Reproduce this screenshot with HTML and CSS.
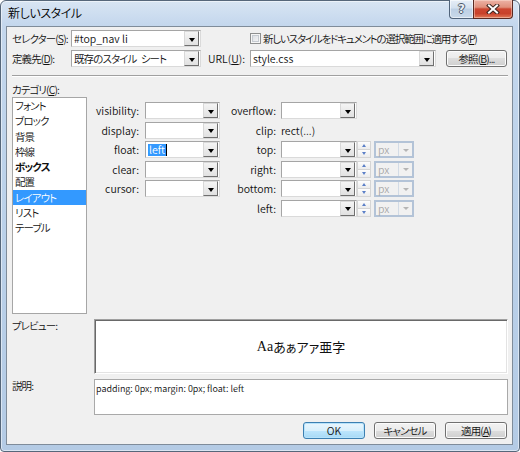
FILE: index.html
```html
<!DOCTYPE html>
<html lang="ja">
<head>
<meta charset="utf-8">
<title>新しいスタイル</title>
<link rel="stylesheet" href="styles.css">
</head>
<body>
<div class="window">
  <div class="titlebar">
    <span class="title jp">新しいスタイル</span>
    <div class="caption">
      <div class="cbtn help"><span class="qmark">?</span></div>
      <div class="cbtn close">
        <svg class="xicon" width="14" height="10" viewBox="0 0 14 10">
          <path d="M3 1.5 L11 8.5 M11 1.5 L3 8.5" stroke="#3d2620" stroke-width="4" stroke-linecap="square" fill="none"/>
          <path d="M3 1.5 L11 8.5 M11 1.5 L3 8.5" stroke="#ffffff" stroke-width="2" stroke-linecap="square" fill="none"/>
        </svg>
      </div>
    </div>
  </div>
  <div class="client">
    <div class="row">
      <span class="lbl jp">セレクター(<u>S</u>):</span>
      <div class="combo w130"><span class="val">#top_nav li</span><span class="dd"><i class="arrow"></i></span></div>
      <div class="check"><span class="box"></span><span class="check-text jp">新しいスタイルをドキュメントの選択範囲に適用する(<u>P</u>)</span></div>
    </div>
    <div class="row">
      <span class="lbl jp">定義先(<u>D</u>):</span>
      <div class="combo w130"><span class="val jp">既存のスタイル&ensp;シート</span><span class="dd"><i class="arrow"></i></span></div>
      <span class="lbl url-lbl">URL(<u>U</u>):</span>
      <div class="combo w186"><span class="val">style.css</span><span class="dd"><i class="arrow"></i></span></div>
      <div class="btn browse jp">参照(<u>B</u>)...</div>
    </div>
    <div class="sep"></div>
    <div class="cat-label jp">カテゴリ(<u>C</u>):</div>
    <div class="main">
      <ul class="list jp">
        <li>フォント</li>
        <li>ブロック</li>
        <li>背景</li>
        <li>枠線</li>
        <li class="bold">ボックス</li>
        <li>配置</li>
        <li class="selected">レイアウト</li>
        <li>リスト</li>
        <li>テーブル</li>
      </ul>
      <div class="props">
        <div class="group left-group">
          <span class="plbl">visibility:</span>
          <div class="combo"><span class="val"></span><span class="dd"><i class="arrow"></i></span></div>
          <span class="plbl">display:</span>
          <div class="combo"><span class="val"></span><span class="dd"><i class="arrow"></i></span></div>
          <span class="plbl">float:</span>
          <div class="combo"><span class="val"><span class="sel">left</span><span class="caret"></span></span><span class="dd"><i class="arrow"></i></span></div>
          <span class="plbl">clear:</span>
          <div class="combo"><span class="val"></span><span class="dd"><i class="arrow"></i></span></div>
          <span class="plbl">cursor:</span>
          <div class="combo"><span class="val"></span><span class="dd"><i class="arrow"></i></span></div>
        </div>
        <div class="group right-group">
          <span class="plbl">overflow:</span>
          <div class="combo"><span class="val"></span><span class="dd"><i class="arrow"></i></span></div>
          <span></span><span></span>

          <span class="plbl">clip:</span>
          <span class="clip-val">rect(...)</span>
          <span></span><span></span>

          <span class="plbl">top:</span>
          <div class="combo"><span class="val"></span><span class="dd"><i class="arrow"></i></span></div>
          <div class="spin"><span class="up"><i></i></span><span class="down"><i></i></span></div>
          <div class="unit"><span class="uval">px</span><span class="udd"><i></i></span></div>

          <span class="plbl">right:</span>
          <div class="combo"><span class="val"></span><span class="dd"><i class="arrow"></i></span></div>
          <div class="spin"><span class="up"><i></i></span><span class="down"><i></i></span></div>
          <div class="unit"><span class="uval">px</span><span class="udd"><i></i></span></div>

          <span class="plbl">bottom:</span>
          <div class="combo"><span class="val"></span><span class="dd"><i class="arrow"></i></span></div>
          <div class="spin"><span class="up"><i></i></span><span class="down"><i></i></span></div>
          <div class="unit"><span class="uval">px</span><span class="udd"><i></i></span></div>

          <span class="plbl">left:</span>
          <div class="combo"><span class="val"></span><span class="dd"><i class="arrow"></i></span></div>
          <div class="spin"><span class="up"><i></i></span><span class="down"><i></i></span></div>
          <div class="unit"><span class="uval">px</span><span class="udd"><i></i></span></div>
        </div>
      </div>
    </div>
    <div class="box-row preview-row">
      <span class="side-lbl jp">プレビュー:</span>
      <div class="preview"><span class="serif">Aa</span>あぁアァ亜字</div>
    </div>
    <div class="box-row desc-row">
      <span class="side-lbl jp">説明:</span>
      <div class="desc">padding: 0px; margin: 0px; float: left</div>
    </div>
    <div class="buttons">
      <div class="btn default">OK</div>
      <div class="btn jp">キャンセル</div>
      <div class="btn jp">適用(<u>A</u>)</div>
    </div>
  </div>
</div>
</body>
</html>
```

FILE: styles.css
```css
* { box-sizing: border-box; }
html, body { margin: 0; padding: 0; }
body {
  width: 520px;
  height: 452px;
  overflow: hidden;
  background: #ffffff;
  font-family: "Noto Sans CJK JP", "Noto Sans", sans-serif;
  font-size: 10.5px;
  font-weight: 350;
  color: #111;
  font-feature-settings: "palt";
}
.jp { letter-spacing: -0.9px; }
u { text-decoration: underline; text-underline-offset: 1px; text-decoration-thickness: 1px; }

.window {
  width: 520px;
  height: 452px;
  border: 1px solid #56677a;
  border-radius: 6px 6px 4px 4px;
  background: linear-gradient(#d8e5f3 0, #c4d7ed 24px, #bcd2ea 40%, #b4cbe5 100%);
  box-shadow: inset 0 0 0 1px rgba(255,255,255,0.5);
  display: flex;
  flex-direction: column;
}

.titlebar {
  flex: none;
  height: 25px;
  display: flex;
  align-items: flex-start;
  padding-left: 7px;
}
.title {
  font-size: 12px;
  line-height: 24px;
  letter-spacing: -0.4px;
  color: #000;
}
.caption {
  margin-left: auto;
  margin-right: 6px;
  margin-top: -1px;
  display: flex;
}
.cbtn {
  height: 19px;
  border: 1px solid #50637a;
  border-top: none;
  display: flex;
  align-items: center;
  justify-content: center;
  flex: none;
}
.help {
  width: 24px;
  border-right: none;
  border-radius: 0 0 0 4px;
  background: linear-gradient(#e6eef7 0, #d3e0ee 45%, #bccfe4 50%, #c9d9ea 100%);
  box-shadow: inset 0 0 0 1px rgba(255,255,255,0.55);
}
.qmark {
  font-family: "DejaVu Sans", sans-serif;
  font-weight: bold;
  font-size: 12px;
  line-height: 12px;
  color: #e9eef4;
  text-shadow: 1px 0 0 #4b5a6b, -1px 0 0 #4b5a6b, 0 1px 0 #4b5a6b, 0 -1px 0 #4b5a6b;
}
.close {
  width: 40px;
  border-color: #5a2a22;
  border-radius: 0 0 4px 0;
  background: linear-gradient(#edb3a6 0, #e0907c 40%, #cc4630 50%, #c8412a 75%, #e07a58 100%);
  box-shadow: inset 0 0 0 1px rgba(255,230,220,0.45);
}
.xicon { display: block; }

.client {
  flex: 1;
  margin: 0 6px 6px 5px;
  border: 1px solid #7f8c9a;
  background: #f0f0f0;
  padding: 3px 4px 0 5px;
  display: flex;
  flex-direction: column;
}

.row {
  display: flex;
  align-items: center;
  height: 17px;
  margin-bottom: 3px;
}
.lbl {
  width: 59px;
  flex: none;
  line-height: 17px;
  white-space: nowrap;
}
.url-lbl { width: 42px; margin-left: 7px; }

.combo {
  height: 17px;
  display: flex;
  align-items: stretch;
  background: #fff;
  border: 1px solid;
  border-color: #a5a5a5 #dadada #dadada #a5a5a5;
  flex: none;
}
.w130 { width: 130px; }
.w186 { width: 186px; }
.combo .val {
  flex: 1;
  padding-left: 2px;
  line-height: 15px;
  white-space: nowrap;
  overflow: hidden;
  display: flex;
  align-items: center;
}
.combo .dd {
  width: 15px;
  margin: 0 1px 0 0;
  border: 1px solid;
  border-color: #d8d8d8 #6f6f6f #6f6f6f #d8d8d8;
  background: linear-gradient(#f4f4f4, #e1e1e1);
  display: flex;
  align-items: center;
  justify-content: center;
  flex: none;
}
.arrow {
  display: block;
  width: 0;
  height: 0;
  margin-top: 2px;
  border-left: 3.5px solid transparent;
  border-right: 3.5px solid transparent;
  border-top: 4px solid #000;
}

.check {
  margin-left: 49px;
  display: flex;
  align-items: center;
}
.check .box {
  width: 11px;
  height: 11px;
  border: 1px solid #8e8f8f;
  background: linear-gradient(135deg, #d6d9de, #fbfbfb);
  box-shadow: inset 0 0 0 1px #f6f6f6, inset 0 0 0 2px #c6cbd1;
  margin-right: 2px;
}
.check-text { line-height: 17px; white-space: nowrap; letter-spacing: -1.2px; }

.btn {
  height: 17px;
  border: 1px solid #707070;
  border-radius: 3px;
  background: linear-gradient(#f2f2f2 0, #ebebeb 50%, #dddddd 50%, #cfcfcf 100%);
  box-shadow: inset 0 0 0 1px #fcfcfc;
  display: flex;
  align-items: center;
  justify-content: center;
  line-height: 15px;
  white-space: nowrap;
  flex: none;
}
.browse { width: 61px; margin-left: 10px; }

.sep {
  margin-top: 5px;
  height: 2px;
  border-top: 1px solid #a0a0a0;
  border-bottom: 1px solid #ffffff;
}
.cat-label {
  height: 20px;
  padding-top: 6px;
  line-height: 14px;
}

.main {
  display: flex;
  height: 217px;
}
.list {
  margin: 0;
  padding: 0;
  list-style: none;
  width: 75px;
  height: 217px;
  border: 1px solid #a6a6a6;
  background: #fff;
}
.list li {
  height: 15.3px;
  line-height: 15.3px;
  padding-left: 2px;
  white-space: nowrap;
}
.list li.bold { font-weight: bold; }
.list li.selected { background: #3399ff; color: #fff; }

.props {
  display: flex;
  margin-left: 7px;
  margin-top: 5px;
  align-items: flex-start;
}
.group {
  display: grid;
  grid-auto-rows: 17px;
  row-gap: 2.6px;
  align-items: center;
}
.left-group { grid-template-columns: 45px 75px; column-gap: 6px; }
.right-group { grid-template-columns: 61px 76px 14px 43px; }
.right-group .plbl { padding-right: 5px; }
.plbl {
  text-align: right;
  line-height: 17px;
  white-space: nowrap;
}
.group .combo { width: 100%; }
.clip-val { line-height: 17px; white-space: nowrap; }

.sel { background: #3399ff; color: #fff; padding: 0 1px; line-height: 12px; }
.caret { display: inline-block; width: 1px; height: 12px; background: #000; }

.spin {
  height: 17px;
  display: flex;
  flex-direction: column;
}
.spin span {
  flex: 1;
  border: 1px solid #d5d5d5;
  background: linear-gradient(#fdfdfd, #ececec);
  display: flex;
  align-items: center;
  justify-content: center;
}
.spin .down { border-top: none; }
.spin .up i {
  display: block; width: 0; height: 0;
  border-left: 2.5px solid transparent; border-right: 2.5px solid transparent;
  border-bottom: 3px solid #5b7fc7;
}
.spin .down i {
  display: block; width: 0; height: 0;
  border-left: 2.5px solid transparent; border-right: 2.5px solid transparent;
  border-top: 3px solid #5b7fc7;
}

.unit {
  margin-left: 3px;
  width: 40px;
  height: 17px;
  border: 2px solid #b3c3d7;
  background: #f1f1f1;
  display: flex;
}
.uval {
  flex: 1;
  color: #a8a8a8;
  line-height: 13px;
  padding-left: 2px;
}
.udd {
  width: 14px;
  border-left: 1px solid #d2dbe6;
  display: flex;
  align-items: center;
  justify-content: center;
}
.udd i {
  display: block; width: 0; height: 0; margin-top: 1px;
  border-left: 3px solid transparent; border-right: 3px solid transparent;
  border-top: 3px solid #b5b5b5;
}

.box-row {
  display: flex;
  margin-top: 5px;
}
.side-lbl {
  width: 82px;
  flex: none;
  line-height: 12px;
  padding-top: 1px;
}
.preview {
  flex: 1;
  height: 55px;
  background: #fff;
  border: 1px solid;
  border-color: #a0a0a0 #ffffff #ffffff #a0a0a0;
  box-shadow: inset 1px 1px 0 #696969, inset -1px -1px 0 #e3e3e3;
  display: flex;
  align-items: center;
  justify-content: center;
  font-size: 13px;
  font-weight: 400;
  line-height: 16px;
}
.serif { font-family: "Liberation Serif", serif; font-size: 14px; }
.desc {
  flex: 1;
  height: 36px;
  background: #fff;
  border: 1px solid #a9a9a9;
  padding: 3px 0 0 1px;
  font-size: 9px;
  line-height: 12px;
  font-feature-settings: normal;
}

.buttons {
  display: flex;
  justify-content: flex-end;
  gap: 9px;
  margin-top: 7px;
  padding-right: 1px;
}
.buttons .btn { width: 62px; }
.btn.default {
  border-color: #3c7fb1;
  background: linear-gradient(#eaf6fd 0, #d9f0fc 50%, #bee6fd 50%, #a7d9f5 100%);
  box-shadow: inset 0 0 0 1px #b7e3fb;
}
```
